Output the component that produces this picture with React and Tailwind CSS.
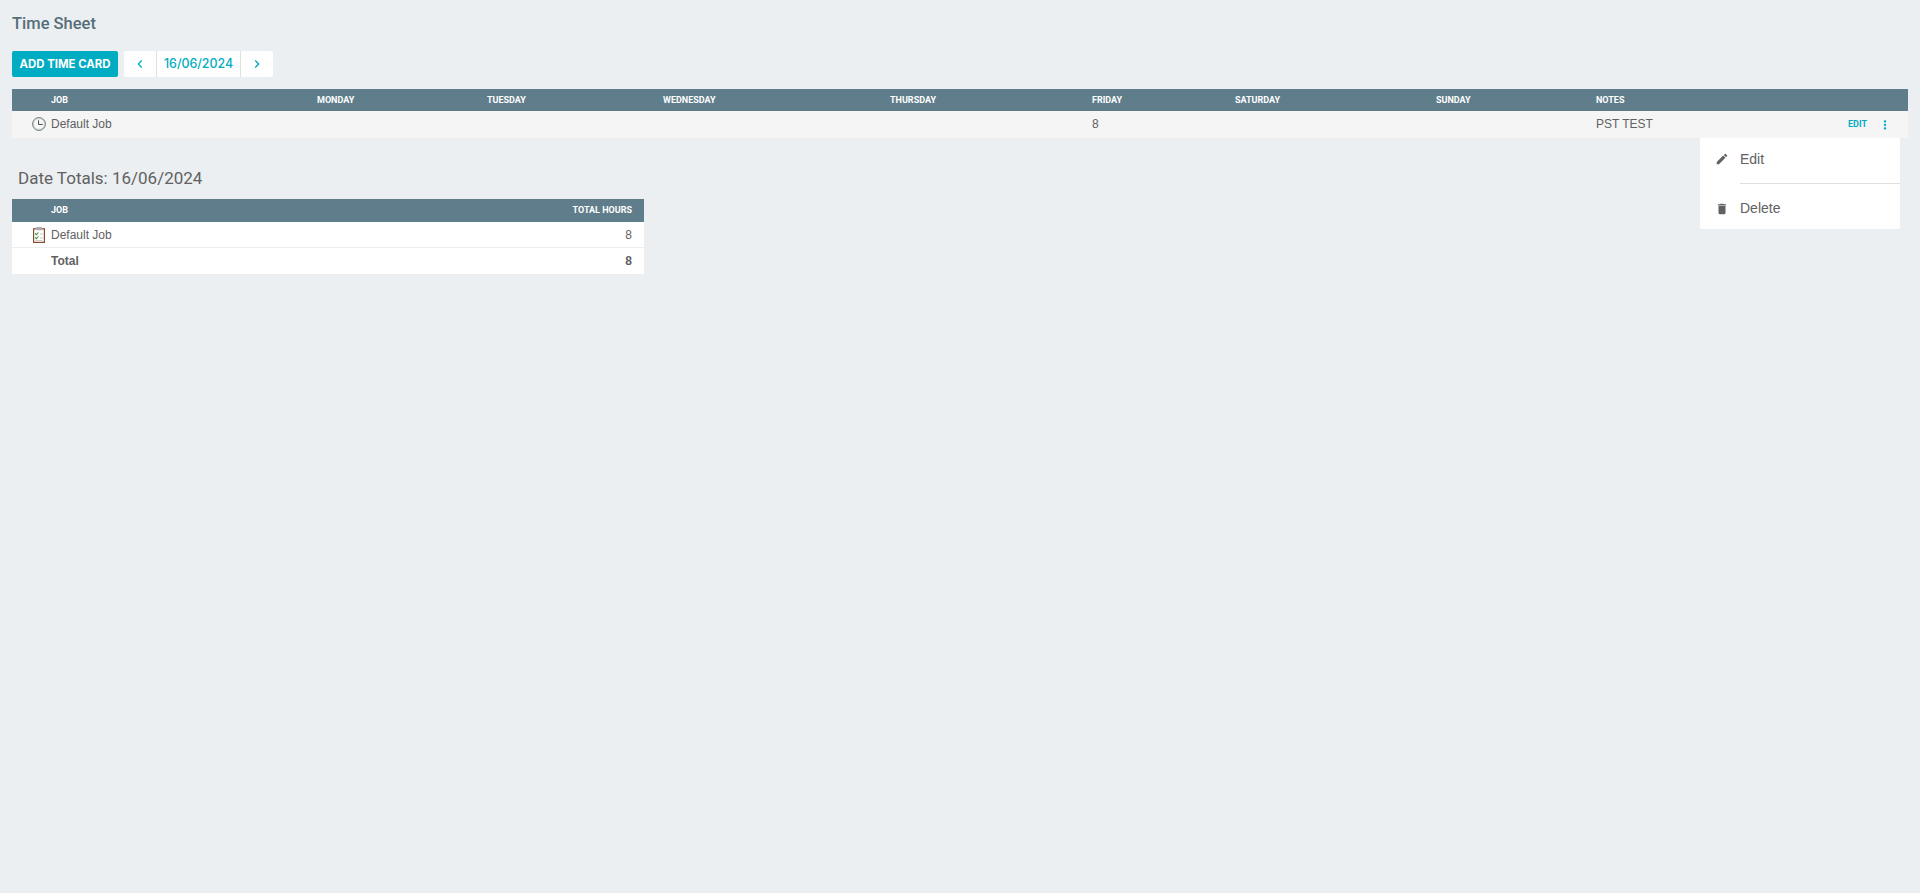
import { MdChevronLeft, MdChevronRight, MdDelete, MdEdit, MdMoreVert } from 'react-icons/md';

const columns = ['Job', 'Monday', 'Tuesday', 'Wednesday', 'Thursday', 'Friday', 'Saturday', 'Sunday', 'Notes'];
const gridCols = 'grid-cols-[266px_170px_176px_227px_202px_143px_201px_160px_1fr]';

function ClockIcon() {
  return (
    <svg width="14" height="14" viewBox="0 0 15 15" className="shrink-0">
      <circle cx="7.5" cy="7.5" r="6.9" fill="#d5dada" stroke="#6f7678" strokeWidth="1" />
      <circle cx="7.5" cy="7.5" r="5.2" fill="#f7f8f8" />
      <path d="M7 3.5V8H11.5" fill="none" stroke="#3c4243" strokeWidth="1" />
    </svg>
  );
}

function ClipboardIcon() {
  return (
    <svg width="12" height="16" viewBox="0 0 12 16" className="shrink-0">
      <rect x="0.6" y="1.8" width="10.8" height="13.6" fill="#fff" stroke="#8a4a2b" strokeWidth="1.2" />
      <rect x="3" y="0" width="6" height="3.2" rx="1" fill="#a9adad" />
      <path d="M2.2 6.5l1.2 1.2 2-2.2M2.2 10.5l1.2 1.2 2-2.2" fill="none" stroke="#2e9e3a" strokeWidth="1.1" />
      <path d="M7 7h3M7 11h3M2.5 13.6h7" stroke="#c4c8c8" strokeWidth="1" />
    </svg>
  );
}

export default function App() {
  return (
    <div className="min-h-[893px] bg-[#eceff1] px-3 pt-[14px] font-['Liberation_Sans',sans-serif] text-[12px] text-[#616161]">
      <h1 className="font-['Roboto',sans-serif] text-[16.5px] leading-[19px] font-medium text-[#546e7a]">Time Sheet</h1>

      <div className="mt-[18px] flex gap-[6px]">
        <button className="h-[26px] w-[106px] rounded-[2px] bg-[#00acc1] pt-px font-['Inter',sans-serif] text-[11.4px] font-bold whitespace-nowrap text-white">
          ADD TIME CARD
        </button>
        <div className="flex h-[26px] overflow-hidden rounded-[2px] bg-white font-['Inter',sans-serif] text-[#00acc1]">
          <button className="flex w-[33px] items-center justify-center border-r border-[#e0e0e0]">
            <MdChevronLeft size={16} />
          </button>
          <div className="flex w-[84px] items-center justify-center border-r border-[#e0e0e0] pt-px text-[12.4px] font-medium">16/06/2024</div>
          <button className="flex w-[32px] items-center justify-center">
            <MdChevronRight size={16} />
          </button>
        </div>
      </div>

      <div className="mt-3">
        <div className={`grid h-[22px] items-center bg-[#607d8b] pt-px pl-[39px] font-['Roboto',sans-serif] text-[9px] font-bold text-white uppercase ${gridCols}`}>
          {columns.map((c) => (
            <div key={c}>{c}</div>
          ))}
        </div>
        <div className={`relative grid h-[27px] items-center bg-[#f5f5f5] pb-px pl-[39px] ${gridCols}`}>
          <div className="-ml-[19px] flex items-center gap-[5px]">
            <ClockIcon />
            <span>Default Job</span>
          </div>
          <div className="col-start-6">8</div>
          <div className="col-start-9">PST TEST</div>
          <div className="absolute top-0 right-[16px] flex h-full items-center gap-[11px] text-[#00acc1]">
            <span className="font-['Roboto',sans-serif] text-[9px] font-bold">EDIT</span>
            <MdMoreVert size={14} />
          </div>
        </div>
      </div>

      <div className="absolute top-[138px] left-[1700px] h-[91px] w-[200px] rounded-b-[2px] bg-white text-[14px]">
        <div className="flex h-[45px] items-center pb-[3px] pl-[15px]">
          <MdEdit size={14} className="mr-[11px]" />
          <span>Edit</span>
        </div>
        <div className="ml-10 h-px bg-[#e0e0e0]" />
        <div className="flex h-[45px] items-center pt-[4px] pl-[15px]">
          <MdDelete size={14} className="mr-[11px]" />
          <span>Delete</span>
        </div>
      </div>

      <h2 className="mt-[30px] ml-[6px] font-['Roboto',sans-serif] text-[17px] leading-[20px] text-[#616161]">Date Totals: 16/06/2024</h2>

      <div className="mt-[11px] w-[632px]">
        <div className="flex h-[23px] items-center justify-between bg-[#607d8b] pr-3 pl-[39px] font-['Roboto',sans-serif] text-[9px] font-bold text-white uppercase">
          <span>Job</span>
          <span>Total Hours</span>
        </div>
        <div className="flex h-[26px] items-center justify-between border-b border-[#eceff1] bg-white pr-3 pl-[21px]">
          <span className="flex items-center gap-[6px]">
            <ClipboardIcon />
            <span>Default Job</span>
          </span>
          <span>8</span>
        </div>
        <div className="flex h-[26px] items-center justify-between bg-white pr-3 pl-[39px] font-bold">
          <span>Total</span>
          <span>8</span>
        </div>
      </div>
    </div>
  );
}
